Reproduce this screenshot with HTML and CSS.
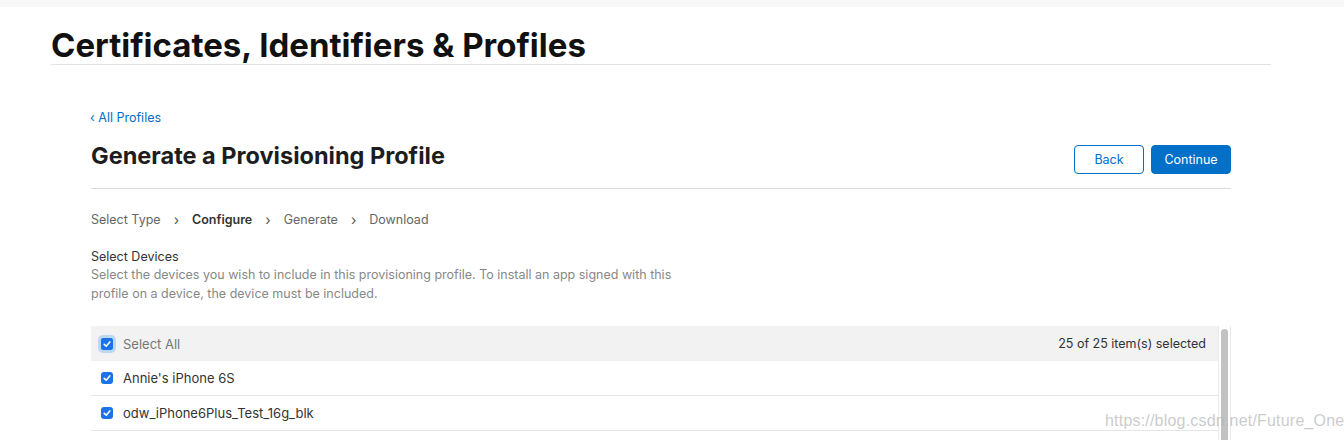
FILE: index.html
```html
<!DOCTYPE html>
<html>
<head>
<meta charset="utf-8">
<link rel="stylesheet" href="styles.css">
</head>
<body>
<div class="topbar"></div>
<header class="page-header">
  <h1 class="page-title">Certificates, Identifiers &amp; Profiles</h1>
</header>
<main class="content">
  <a class="back-link" href="#">‹ All Profiles</a>
  <div class="title-row">
    <h2 class="section-title">Generate a Provisioning Profile</h2>
    <div class="actions">
      <button class="btn btn-outline">Back</button>
      <button class="btn btn-primary">Continue</button>
    </div>
  </div>
  <nav class="steps">
    <span class="step">Select Type</span>
    <span class="chev">›</span>
    <span class="step active">Configure</span>
    <span class="chev">›</span>
    <span class="step">Generate</span>
    <span class="chev">›</span>
    <span class="step">Download</span>
  </nav>
  <div class="intro">
    <div class="intro-title">Select Devices</div>
    <p class="intro-text">Select the devices you wish to include in this provisioning profile. To install an app signed with this<br>profile on a device, the device must be included.</p>
  </div>
  <div class="table-wrap">
    <div class="rows">
      <div class="row head">
        <span class="check focus"><svg viewBox="0 0 12 12"><path d="M3.2 6.3 L5.2 8.2 L8.8 3.9" fill="none" stroke="#fff" stroke-width="1.6" stroke-linecap="round" stroke-linejoin="round"/></svg></span>
        <span class="label muted">Select All</span>
        <span class="count">25 of 25 item(s) selected</span>
      </div>
      <div class="row">
        <span class="check"><svg viewBox="0 0 12 12"><path d="M3.2 6.3 L5.2 8.2 L8.8 3.9" fill="none" stroke="#fff" stroke-width="1.6" stroke-linecap="round" stroke-linejoin="round"/></svg></span>
        <span class="label">Annie's iPhone 6S</span>
      </div>
      <div class="row">
        <span class="check"><svg viewBox="0 0 12 12"><path d="M3.2 6.3 L5.2 8.2 L8.8 3.9" fill="none" stroke="#fff" stroke-width="1.6" stroke-linecap="round" stroke-linejoin="round"/></svg></span>
        <span class="label">odw_iPhone6Plus_Test_16g_blk</span>
      </div>
    </div>
    <div class="scrollbar"><div class="thumb"></div></div>
  </div>
</main>
<div class="watermark">https://blog.csdn.net/Future_One</div>
</body>
</html>
```
FILE: styles.css
```css
html, body {
  margin: 0;
  padding: 0;
  background: #fff;
  font-family: Inter, "Noto Sans", Roboto, sans-serif;
  color: #333;
  overflow: hidden;
  height: 440px;
}
.topbar {
  height: 7px;
  background: #f8f8f8;
}
.page-header {
  margin: 0 73px 0 51px;
  border-bottom: 1px solid #e2e2e2;
  padding-top: 19px;
  height: 38px;
}
.page-title {
  margin: 0;
  font-size: 33px;
  font-weight: 700;
  line-height: 38px;
  color: #111;
  letter-spacing: 0;
}
.content {
  margin: 0 113px 0 91px;
  padding-top: 45px;
}
.back-link {
  display: block;
  color: #0070c9;
  text-decoration: none;
  font-size: 12.5px;
  line-height: 16px;
  margin-left: -1px;
}
.title-row {
  display: flex;
  justify-content: space-between;
  align-items: flex-start;
  border-bottom: 1px solid #dcdcdc;
  height: 62px;
}
.section-title {
  margin: 16px 0 0 0;
  font-size: 23.5px;
  font-weight: 700;
  line-height: 28px;
  color: #1d1d1f;
  letter-spacing: 0;
}
.actions {
  display: flex;
  gap: 7px;
  margin-top: 19px;
}
.btn {
  font-family: inherit;
  font-size: 12.5px;
  height: 29px;
  border-radius: 4px;
  padding: 0;
  cursor: pointer;
}
.btn-outline {
  width: 70px;
  background: #fff;
  border: 1px solid #0070c9;
  color: #0070c9;
}
.btn-primary {
  width: 80px;
  background: #0070c9;
  border: 1px solid #0070c9;
  color: #fff;
}
.steps {
  display: flex;
  align-items: center;
  gap: 13px;
  margin-top: 22px;
  font-size: 12.5px;
  line-height: 18px;
  color: #666;
}
.step.active {
  font-weight: 600;
  color: #333;
}
.chev {
  font-size: 14px;
  color: #555;
  line-height: 18px;
}
.intro {
  margin-top: 19px;
}
.intro-title {
  font-size: 12.5px;
  line-height: 17px;
  color: #333;
}
.intro-text {
  margin: 0;
  font-size: 12.5px;
  line-height: 19px;
  color: #888;
}
.table-wrap {
  display: flex;
  margin-top: 23px;
  height: 120px;
}
.rows {
  flex: 1;
}
.row {
  display: flex;
  align-items: center;
  height: 34px;
  border-bottom: 1px solid #e6e6e6;
  padding: 0 12px 0 10px;
  font-size: 13px;
}
.row.head {
  background: #f2f2f2;
  border-bottom: none;
  height: 35px;
}
.check {
  width: 12px;
  height: 12px;
  border-radius: 3px;
  background: #1a73e8;
  display: flex;
  align-items: center;
  justify-content: center;
  flex: none;
}
.check svg {
  width: 12px;
  height: 12px;
}
.check.focus {
  box-shadow: 0 0 0 3px #bcd8f5;
  border-radius: 2px;
}
.label {
  margin-left: 10px;
  color: #333;
}
.label.muted {
  color: #777;
}
.count {
  margin-left: auto;
  color: #333;
  font-size: 12.5px;
}
.scrollbar {
  width: 13px;
  border-left: 1px solid #eaeaea;
  border-right: 1px solid #eaeaea;
  display: flex;
  justify-content: center;
  padding-top: 3px;
  box-sizing: border-box;
}
.thumb {
  width: 7px;
  height: 120px;
  border-radius: 4px;
  background: #c2c2c2;
}
.watermark {
  position: absolute;
  left: 1105px;
  top: 412px;
  font-family: "Liberation Sans", Arial, sans-serif;
  font-size: 16px;
  color: rgba(180, 180, 180, 0.7);
  letter-spacing: 0.2px;
}
```
